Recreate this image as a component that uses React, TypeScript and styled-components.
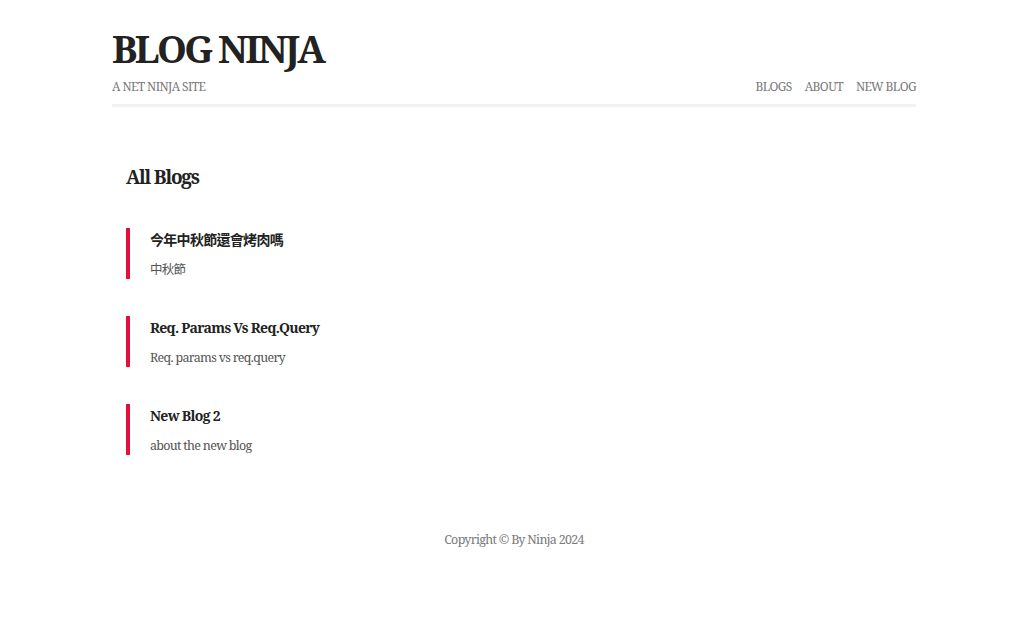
import React from "react";
import styled, { createGlobalStyle } from "styled-components";

const Global = createGlobalStyle`
  html, body { margin: 0; padding: 0; background: #fff; }
  body {
    font-family: "Noto Serif", "DejaVu Serif Condensed", "Noto Sans CJK TC", serif;
    color: #333;
  }
`;

const Page = styled.div`
  width: 804px;
  margin-left: 112px;
`;

const Nav = styled.nav`
  display: flex;
  align-items: flex-end;
  justify-content: space-between;
  padding: 22px 0 9px;
  border-bottom: 3px solid #f2f2f2;
`;

const Brand = styled.div`
  display: flex;
  flex-direction: column;
`;

const Title = styled.h1`
  margin: 0;
  font-size: 38px;
  font-weight: 700;
  color: #222;
  line-height: 52px;
  letter-spacing: -2.7px;
`;

const Tagline = styled.p`
  margin: 5px 0 0;
  font-size: 12px;
  line-height: 16px;
  color: #7a7a7a;
  letter-spacing: -0.6px;
`;

const Links = styled.ul`
  display: flex;
  gap: 13px;
  list-style: none;
  margin: 0;
  padding: 0;
`;

const LinkItem = styled.li`
  font-size: 12px;
  line-height: 16px;
  color: #7a7a7a;
  letter-spacing: -0.6px;
`;

const Content = styled.main`
  padding: 56px 14px 0;
`;

const Heading = styled.h2`
  margin: 0 0 37px;
  font-size: 19px;
  line-height: 28px;
  font-weight: 700;
  color: #222;
  letter-spacing: -1.2px;
`;

const BlogList = styled.div`
  display: flex;
  flex-direction: column;
  gap: 37px;
`;

const Blog = styled.div`
  border-left: 4px solid #e3103f;
  padding: 2px 0 0 20px;
  height: 49px;
`;

const BlogTitle = styled.h3`
  margin: 0 0 11px;
  font-size: 14px;
  font-weight: 700;
  color: #222;
  line-height: 20px;
  letter-spacing: -0.7px;
`;

const Snippet = styled.p`
  margin: 0;
  font-size: 12.5px;
  color: #555;
  line-height: 18px;
  letter-spacing: -0.7px;
`;

const Footer = styled.footer`
  margin-top: 76px;
  text-align: center;
  font-size: 12.5px;
  line-height: 18px;
  color: #7a7a7a;
  letter-spacing: -0.7px;
`;

const blogs = [
  { title: "今年中秋節還會烤肉嗎", snippet: "中秋節" },
  { title: "Req. Params Vs Req.Query", snippet: "Req. params vs req.query" },
  { title: "New Blog 2", snippet: "about the new blog" },
];

export default function App() {
  return (
    <>
      <Global />
      <Page>
        <Nav>
          <Brand>
            <Title>BLOG NINJA</Title>
            <Tagline>A NET NINJA SITE</Tagline>
          </Brand>
          <Links>
            <LinkItem>BLOGS</LinkItem>
            <LinkItem>ABOUT</LinkItem>
            <LinkItem>NEW BLOG</LinkItem>
          </Links>
        </Nav>
        <Content>
          <Heading>All Blogs</Heading>
          <BlogList>
            {blogs.map((b) => (
              <Blog key={b.title}>
                <BlogTitle>{b.title}</BlogTitle>
                <Snippet>{b.snippet}</Snippet>
              </Blog>
            ))}
          </BlogList>
        </Content>
        <Footer>Copyright © By Ninja 2024</Footer>
      </Page>
    </>
  );
}
